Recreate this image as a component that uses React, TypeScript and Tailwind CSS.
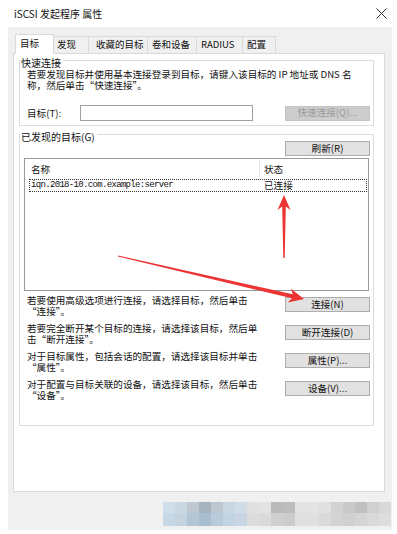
import type { ReactNode } from "react";

const ROW1 = ["#cfdeea", "#cad8e4", "#bfc8d0", "#a6b2bc", "#bdc7d0", "#cad6e1", "#d0dce6", "#e0e0e0", "#e2e2e2", "#bababa", "#bdbdbd", "#e3e3e3", "#e4e4e4", "#e0e0e0", "#d2d2d2", "#c9c9c9", "#c0c0c0", "#d0d0d0", "#d8d8d8"];
const ROW2 = ["#c6d7e6", "#c3d3e0", "#b3c6d5", "#a9bed0", "#b8cbda", "#c1d4e3", "#c7d6e2", "#dcdcdc", "#dadada", "#cfcfcf", "#cccccc", "#e0e0e0", "#e0e0e0", "#dadada", "#d4d4d4", "#d0d0d0", "#d5d5d5", "#d9d9d9", "#dddddd"];

const TABS = [
  { label: "发现", cls: "w-[35px] pl-[3px]" },
  { label: "收藏的目标", cls: "w-[59px] pl-[7px]" },
  { label: "卷和设备", cls: "w-[49px] pl-[4px]" },
  { label: "RADIUS", cls: "w-[46px] pl-[4px]" },
  { label: "配置", cls: "w-[33px] pl-[4px]" },
];

const ACTIONS = [
  { a: "若要使用高级选项进行连接，请选择目标，然后单击", b: "“连接”。", btn: "连接(N)" },
  { a: "若要完全断开某个目标的连接，请选择该目标，然后单", b: "击“断开连接”。", btn: "断开连接(D)" },
  { a: "对于目标属性，包括会话的配置，请选择该目标并单击", b: "“属性”。", btn: "属性(P)..." },
  { a: "对于配置与目标关联的设备，请选择该目标，然后单击", b: "“设备”。", btn: "设备(V)..." },
];

function Btn({ children, disabled }: { children: ReactNode; disabled?: boolean }) {
  return (
    <div
      className={`flex h-[15px] w-[85px] shrink-0 items-center justify-center border text-[9.6px] leading-none ${
        disabled ? "border-[#c4c4c4] bg-[#cccccc] text-[#9a9a9a]" : "border-[#adadad] bg-[#e1e1e1] text-[#111]"
      }`}
    >
      {children}
    </div>
  );
}

function Legend({ children }: { children: ReactNode }) {
  return (
    <legend className="ml-[1px] pr-[2px] text-[10px] leading-[12px]">
      <span className="relative top-[3px]">{children}</span>
    </legend>
  );
}

export default function App() {
  return (
    <div className="relative flex h-[534px] w-[397px] flex-col overflow-hidden bg-white font-['Noto_Sans_CJK_SC',sans-serif] text-[#111]">
      {/* Title bar */}
      <div className="flex h-[27px] shrink-0 items-center justify-between pl-[14px] pr-[10px]">
        <span className="text-[10px] leading-none">iSCSI 发起程序 属性</span>
        <svg width="11" height="11" viewBox="0 0 11 11">
          <path d="M0.5 0.5 L10.5 10.5 M10.5 0.5 L0.5 10.5" stroke="#333" strokeWidth="1" />
        </svg>
      </div>

      {/* Dialog body */}
      <div className="ml-[8px] flex h-[503px] w-[384px] flex-col bg-[#f0f0f0] pl-[5px] pt-[7px]">
        {/* Tabs */}
        <div className="relative z-10 ml-[2px] flex h-[19px] items-end text-[9.5px] leading-none">
          <div className="-mb-px flex h-[20px] w-[39px] items-center border border-b-0 border-[#d9d9d9] bg-white pb-[1px] pl-[4px]">
            目标
          </div>
          {TABS.map((t) => (
            <div
              key={t.label}
              className={`flex h-[17px] items-center border-r border-t border-[#d9d9d9] bg-[#f0f0f0] ${t.cls}`}
            >
              {t.label}
            </div>
          ))}
        </div>

        {/* Panel */}
        <div className="flex h-[439px] w-[372px] flex-col border border-[#d9d9d9] bg-white pl-[5px] text-[9.6px] leading-[11px]">
          {/* Quick connect */}
          <fieldset className="w-[355px] border border-[#dcdcdc]">
            <Legend>快速连接</Legend>
            <div className="pb-[4px] pl-[7px] pr-[3px]">
              <p className="mt-[3px] whitespace-nowrap">
                若要发现目标并使用基本连接登录到目标，请键入该目标的 IP 地址或 DNS 名
                <br />
                称，然后单击“快速连接”。
              </p>
              <div className="mt-[14px] flex h-[16px] items-center">
                <span className="w-[53px]">目标(T):</span>
                <div className="h-[16px] w-[173px] border border-[#a0a0a0] bg-white" />
                <div className="ml-auto">
                  <Btn disabled>快速连接(Q)...</Btn>
                </div>
              </div>
            </div>
          </fieldset>

          {/* Discovered targets */}
          <fieldset className="mt-[2px] w-[355px] border border-[#dcdcdc]">
            <Legend>已发现的目标(G)</Legend>
            <div className="flex flex-col pb-[24px]">
              <div className="mt-[1px] flex justify-end pr-[3px]">
                <Btn>刷新(R)</Btn>
              </div>
              <div className="mx-[4px] mt-[2px] h-[133px] border border-[#9a9a9a] bg-white">
                <div className="flex h-[20px] items-center">
                  <div className="w-[234px] pl-[6px]">名称</div>
                  <div className="h-[19px] w-px bg-[#e5e5e5]" />
                  <div className="pl-[4px]">状态</div>
                </div>
                <div className="ml-[4px] mr-[1px] flex h-[13px] items-center border border-dotted border-[#333]">
                  <div className="w-[229px] pl-[1px] font-['Liberation_Mono',monospace] text-[9px] tracking-[-0.67px]">
                    iqn.2018-10.com.example:server
                  </div>
                  <div className="pl-[5px]">已连接</div>
                </div>
              </div>
              <div className="mt-[4px] flex flex-col gap-[6px]">
                {ACTIONS.map((r) => (
                  <div key={r.btn} className="flex h-[22px] justify-between pl-[7px] pr-[3px]">
                    <p className="whitespace-nowrap">
                      {r.a}
                      <br />
                      {r.b}
                    </p>
                    <div className="mt-[2px]">
                      <Btn>{r.btn}</Btn>
                    </div>
                  </div>
                ))}
              </div>
            </div>
          </fieldset>
        </div>

        {/* Blurred footer buttons */}
        <div className="ml-[150px] mt-[10px] flex flex-col">
          {[ROW1, ROW2].map((row, i) => (
            <div key={i} className="flex">
              {row.map((c, j) => (
                <div key={j} className={i === 0 ? "h-[11px] w-[12px]" : "h-[13px] w-[12px]"} style={{ backgroundColor: c }} />
              ))}
            </div>
          ))}
        </div>
      </div>

      {/* Red annotation arrows */}
      <svg className="pointer-events-none absolute left-0 top-0" width="397" height="534" viewBox="0 0 397 534">
        <polygon
          points="284,195 290.5,210 285.8,206.5 284.7,258 283.3,258 282.2,206.5 277.5,210"
          fill="#ec3434"
        />
        <polygon
          points="304,299 291,288.8 292.75,294.35 118.14,255.4 117.86,256.6 291.85,298.25 287.8,302.4"
          fill="#ec3434"
        />
      </svg>
    </div>
  );
}
